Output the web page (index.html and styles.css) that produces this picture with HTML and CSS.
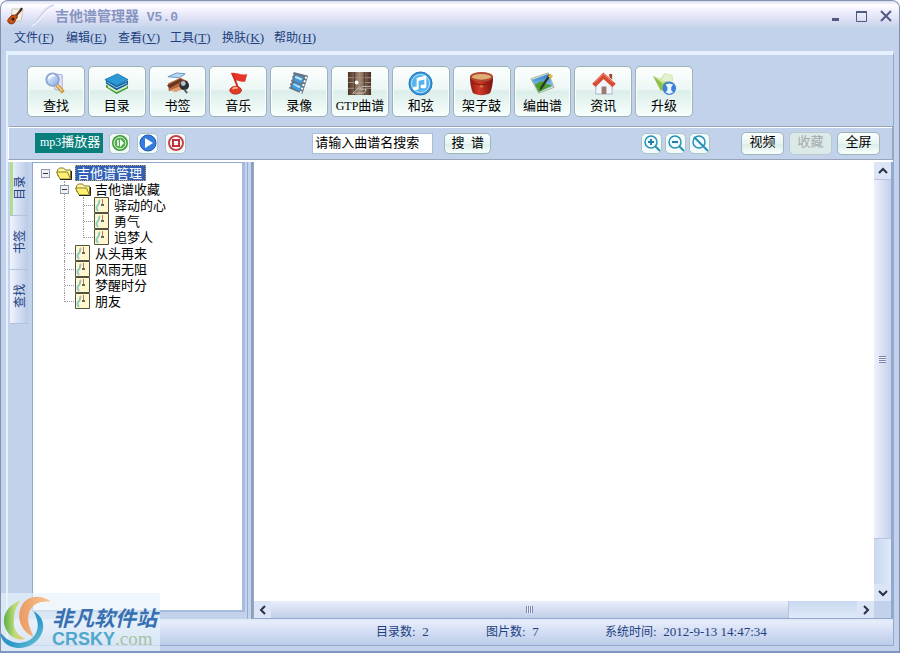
FILE: index.html
```html
<!DOCTYPE html>
<html lang="zh-CN">
<head>
<meta charset="utf-8">
<title>吉他谱管理器 V5.0</title>
<link rel="stylesheet" href="styles.css">
</head>
<body>
<svg class="defs" aria-hidden="true">
  <defs>
    <linearGradient id="lens" x1="0" y1="0" x2="1" y2="1"><stop offset="0" stop-color="#f4faff"/><stop offset="1" stop-color="#7fa9e0"/></linearGradient>
    <linearGradient id="sky" x1="0" y1="0" x2="0" y2="1"><stop offset="0" stop-color="#2d7fd0"/><stop offset="1" stop-color="#b5dcf5"/></linearGradient>
    <linearGradient id="wood" x1="0" y1="0" x2="1" y2="0"><stop offset="0" stop-color="#493224"/><stop offset=".5" stop-color="#a58b76"/><stop offset="1" stop-color="#453026"/></linearGradient>
    <linearGradient id="drum" x1="0" y1="0" x2="1" y2="0"><stop offset="0" stop-color="#8f1712"/><stop offset=".4" stop-color="#d43a29"/><stop offset="1" stop-color="#79120d"/></linearGradient>
    <linearGradient id="leaf" x1="0" y1="0" x2="1" y2="0"><stop offset="0" stop-color="#5caf45"/><stop offset=".5" stop-color="#bddb79"/><stop offset="1" stop-color="#f3c46d"/></linearGradient>
    <linearGradient id="ocean" x1="0" y1="0" x2="1" y2="1"><stop offset="0" stop-color="#2877b9"/><stop offset=".6" stop-color="#2f9bc9"/><stop offset="1" stop-color="#7dcbd7"/></linearGradient>
    <linearGradient id="flame" x1="0" y1="0" x2="1" y2="0"><stop offset="0" stop-color="#ec9a63"/><stop offset="1" stop-color="#f8c795"/></linearGradient>
    <symbol id="folder" viewBox="0 0 16 15">
      <path d="M1.500 9V4l2-2h4l2 2h5v8H4z" fill="#fff6a0" stroke="#817a21"/>
      <path d="M.5 6h11l3 7H4z" fill="#ffef73" stroke="#8b8124"/>
      <path d="M15.500 5v8.500H4" fill="none" stroke="#222"/>
    </symbol>
    <symbol id="sheet" viewBox="0 0 15 16">
      <path d="M.5.5h14v15H.5z" fill="#fff8cf" stroke="#52523d"/>
      <path d="M6 3c-2 2 0 3-2 5s-2 3 0 6" fill="none" stroke="#8fc9c3" stroke-width="2"/>
      <path d="M8.500 2v6" stroke="#e0684c"/><path d="M7 7h3v2H7z" fill="#5e6c60"/>
    </symbol>
  </defs>
</svg>
<div class="window">
  <header class="titlebar">
    <svg class="app-icon" viewBox="0 0 18 18" aria-hidden="true"><path d="M5 2h11l-2 12H4z" fill="#f4f2e6" stroke="#c8c8bd"/><path d="M7 11l7-8" stroke="#6b3516" stroke-width="2"/><path d="M13 4l2-3" stroke="#322015" stroke-width="2"/><path d="M4 9c2-2 3 0 4-1s3 1 2 3-2 1-2 3-3 4-6 2 0-5 2-7z" fill="#c75618" stroke="#7f310c"/><circle cx="6" cy="12" r="1.500" fill="#3a190b"/></svg>
    <svg class="swoosh" viewBox="0 0 30 24" aria-hidden="true"><path d="M5 22C15 17 16 5 29 1" fill="none" stroke="#d3d7ec" stroke-width="2"/><path d="M7 22C17 17 18 6 30 2" fill="none" stroke="#fff" stroke-width="1"/></svg>
    <h1 class="title">吉他谱管理器<span class="latin-title"> V5.0</span></h1>
    <div class="win-buttons">
      <button type="button" class="win-button" aria-label="最小化"><svg viewBox="0 0 12 12"><path d="M2 8h7v3H2z" fill="#535a80"/></svg></button>
      <button type="button" class="win-button" aria-label="最大化"><svg viewBox="0 0 12 12"><path d="M1.500 1.500h10v10h-10z" fill="none" stroke="#535a80"/><path d="M1 1h11v2H1z" fill="#535a80"/></svg></button>
      <button type="button" class="win-button" aria-label="关闭"><svg viewBox="0 0 12 12"><path d="M1 1l10 10M11 1L1 11" stroke="#535a80" stroke-width="2"/></svg></button>
    </div>
  </header>
  <nav class="menu">
    <button type="button">文件<span class="latin">(<u>F</u>)</span></button>
    <button type="button">编辑<span class="latin">(<u>E</u>)</span></button>
    <button type="button">查看<span class="latin">(<u>V</u>)</span></button>
    <button type="button">工具<span class="latin">(<u>T</u>)</span></button>
    <button type="button">换肤<span class="latin">(<u>K</u>)</span></button>
    <button type="button">帮助<span class="latin">(<u>H</u>)</span></button>
  </nav>
  <div class="frame">
    <div class="toolbar">
      <button type="button" class="tool"><svg viewBox="0 0 26 26"><path d="M12 3l8 1v17l-8-2z" fill="#e4e6f7" stroke="#a9aed6"/><path d="M14 14l7 8" stroke="#c98b36" stroke-width="4"/><path d="M14 14l6 7" stroke="#f0cb7e" stroke-width="2"/><circle cx="10" cy="9" r="6.500" fill="url(#lens)" stroke="#8fa6d6" stroke-width="2"/><path d="M6 8c1-3 4-4 6-3" stroke="#fff" stroke-width="2" fill="none"/></svg>查找</button>
      <button type="button" class="tool"><svg viewBox="0 0 26 26"><path d="M2 14l11 7 12-6v3l-12 6-11-7z" fill="#3b9a32"/><path d="M4 15l9 5 11-5v2l-11 5-9-5z" fill="#d7eabf"/><path d="M2 9l11 6 12-5v4l-12 6-11-7z" fill="#165f96"/><path d="M3 11l10 6 11-5v1l-11 5-10-6z" fill="#8fc9e4"/><path d="M1 9l13-6 11 6-12 6z" fill="#2b9ad4" stroke="#1979b3"/></svg>目录</button>
      <button type="button" class="tool"><svg viewBox="0 0 26 26"><path d="M3 6l9-4 9 1-6 4z" fill="#b8d7ef" stroke="#6495bf"/><path d="M3 13l13-6 8 4-11 7-9 3z" fill="#bb673e"/><path d="M2 15l14-7 3 2-14 8z" fill="#693622"/><path d="M5 20l13-5 3 3-10 4z" fill="#e4a179"/><circle cx="20" cy="15" r="5" fill="#2e3037"/><circle cx="19" cy="13" r="2.500" fill="#b8c2cb"/><path d="M20 19l3 4" stroke="#5b5b5b" stroke-width="2"/></svg>书签</button>
      <button type="button" class="tool"><svg viewBox="0 0 26 26"><path d="M5 2c6-1 10 3 17 1l-2 8c-4 1-7-2-11-1z" fill="#e63426"/><path d="M7 3l6 16" stroke="#d02a1c" stroke-width="2"/><ellipse cx="10" cy="20" rx="6" ry="4" fill="#e43a25" stroke="#bd2419"/><path d="M7 19c1-2 4-2 5-1" stroke="#ffb092" stroke-width="2" fill="none"/></svg>音乐</button>
      <button type="button" class="tool"><svg viewBox="0 0 26 26"><path d="M7 1l15 4-6 19-14-6z" fill="#657684"/><path d="M9 4l8 3-2 6-8-3zM7 12l8 3-2 6-8-4z" fill="#3c9de2"/><path d="M9 5l7 3-1 2-7-3zM7 13l7 3-1 2-7-4z" fill="#bae5fa"/><path d="M6 3L2 18M20 6l-6 17" stroke="#fff" stroke-width="2" stroke-dasharray="2 2"/></svg>录像</button>
      <button type="button" class="tool"><svg viewBox="0 0 26 26"><path fill="url(#wood)" d="M1 1h24v24H1z"/><path d="M1 7h24M1 12h24M1 18h24" stroke="#a08d78"/><path d="M8 1v24M18 1v24" stroke="#4b382b"/><circle cx="10" cy="12" r="2" fill="#fff"/><path d="M25 16h-9l-3 3h7l-2 4H6l7-6" fill="none" stroke="#c8c0b8"/></svg><span><span class="latin-lg">GTP</span>曲谱</span></button>
      <button type="button" class="tool"><svg viewBox="0 0 26 26"><circle cx="13" cy="13" r="12" fill="#3897dc" stroke="#2374b4"/><circle cx="13" cy="13" r="9.500" fill="#56b4ef" stroke="#bae7ff"/><path d="M10 18V8l8-2v10" fill="none" stroke="#fff" stroke-width="2"/><path d="M10 9l8-2" stroke="#fff" stroke-width="3"/><ellipse cx="8" cy="18" rx="3" ry="2" fill="#fff"/><ellipse cx="16" cy="16" rx="3" ry="2" fill="#fff"/></svg>和弦</button>
      <button type="button" class="tool"><svg viewBox="0 0 26 26"><path d="M1 6c0 6 1 12 3 17 5 3 13 3 18 0 2-5 3-11 3-17z" fill="url(#drum)"/><ellipse cx="13" cy="6" rx="11" ry="4" fill="#dfae77" stroke="#b04a30" stroke-width="2"/><path d="M3 12c6 3 14 3 20 0" stroke="#7f1711" fill="none"/><circle cx="13" cy="16" r="1.500" fill="#c98044"/></svg>架子鼓</button>
      <button type="button" class="tool"><svg viewBox="0 0 26 26"><path d="M1 8l18-6 6 15-16 6z" fill="#f4f7ee" stroke="#9aaf96"/><path d="M2 9l17-6 5 13-15 6z" fill="url(#sky)"/><path d="M5 14c5-2 7-6 11-1l7 2-14 7z" fill="#4d9e2b"/><path d="M22 4l-9 14-3 3 1-5 9-13z" fill="#293527"/><path d="M20 3l4 2-2 3-3-2z" fill="#e0bf3b"/></svg>编曲谱</button>
      <button type="button" class="tool"><svg viewBox="0 0 26 26"><path d="M5 13l8-8 9 9v10H5z" fill="#f1f4fc" stroke="#aab4c8"/><path d="M11 16h5v8h-5z" fill="#9b796c"/><path d="M3 15L13 5l11 10" fill="none" stroke="#d74b31" stroke-width="5"/><path d="M4 12l9-9 10 9" fill="none" stroke="#f5937a"/><path d="M19 3h3v6l-3-3z" fill="#a93f29"/></svg>资讯</button>
      <button type="button" class="tool"><svg viewBox="0 0 26 26"><path d="M1 5l8 3 4-6 8 2 2 14-14 3z" fill="#cfe5a0"/><path d="M1 5l10 8 10-6-1 12-11 1z" fill="#8cc14c"/><path d="M10 10l4-8 6 2 2 8z" fill="#e3f1cf"/><circle cx="18" cy="18" r="7" fill="#3e80d5"/><path d="M14 14l4-1 4 1-2 3v3l2 2-4 2-4-2 2-2v-3z" fill="#e8f6ff"/></svg>升级</button>
    </div>
    <div class="subbar">
      <span class="player-label"><span class="latin-lg">mp3</span>播放器</span>
      <div class="player">
        <button type="button" class="round" aria-label="暂停"><svg viewBox="0 0 18 18"><circle cx="9" cy="9" r="8" fill="#389934"/><circle cx="9" cy="9" r="6" fill="#55ae4b" stroke="#ecffe8"/><path d="M7 6v6" stroke="#fff" stroke-width="1.500"/><path d="M9 5v8l4-4z" fill="#fff"/></svg></button>
        <button type="button" class="round" aria-label="播放"><svg viewBox="0 0 18 18"><circle cx="9" cy="9" r="8" fill="#347de0" stroke="#2854af"/><path d="M6 4l8 5-8 5z" fill="#fff"/></svg></button>
        <button type="button" class="round" aria-label="停止"><svg viewBox="0 0 18 18"><circle cx="9" cy="9" r="7" fill="#fff" stroke="#c8434a" stroke-width="2"/><path d="M6 6h6v6H6z" fill="#fff" stroke="#bd333a" stroke-width="2"/></svg></button>
      </div>
      <div class="search">
        <input type="text" class="search-box" aria-label="曲谱名" value="请输入曲谱名搜索">
        <button type="button" class="small search-button">搜&ensp;谱</button>
      </div>
      <div class="zooms">
        <button type="button" class="round" aria-label="放大"><svg viewBox="0 0 18 18"><circle cx="8" cy="8" r="6" fill="#effbff" stroke="#2590b6" stroke-width="1.500"/><path d="M12 12l5 5" stroke="#2590b6" stroke-width="2"/><path d="M5 8h6M8 5v6" stroke="#217da8" stroke-width="2"/></svg></button>
        <button type="button" class="round" aria-label="缩小"><svg viewBox="0 0 18 18"><circle cx="8" cy="8" r="6" fill="#effbff" stroke="#2590b6" stroke-width="1.500"/><path d="M12 12l5 5" stroke="#2590b6" stroke-width="2"/><path d="M5 8h6" stroke="#217da8" stroke-width="2"/></svg></button>
        <button type="button" class="round" aria-label="还原"><svg viewBox="0 0 18 18"><circle cx="8" cy="8" r="6" fill="#effbff" stroke="#2590b6" stroke-width="1.500"/><path d="M3 3l14 14" stroke="#2590b6" stroke-width="2"/></svg></button>
      </div>
      <div class="actions">
        <button type="button" class="small">视频</button>
        <button type="button" class="small" disabled>收藏</button>
        <button type="button" class="small">全屏</button>
      </div>
    </div>
    <main class="work">
      <div class="tabs">
        <button type="button" class="tab active"><span>目录</span></button>
        <button type="button" class="tab"><span>书签</span></button>
        <button type="button" class="tab"><span>查找</span></button>
      </div>
      <div class="tree-panel">
        <ul class="tree">
          <li><div class="row"><button type="button" class="expander" aria-label="折叠"></button><svg class="folder"><use href="#folder"/></svg><span class="node selected">吉他谱管理</span></div>
            <ul>
              <li><div class="row"><button type="button" class="expander" aria-label="折叠"></button><svg class="folder"><use href="#folder"/></svg><span class="node">吉他谱收藏</span></div>
                <ul>
                  <li><div class="row leaf"><svg class="sheet"><use href="#sheet"/></svg><span class="node">驿动的心</span></div></li>
                  <li><div class="row leaf"><svg class="sheet"><use href="#sheet"/></svg><span class="node">勇气</span></div></li>
                  <li><div class="row leaf"><svg class="sheet"><use href="#sheet"/></svg><span class="node">追梦人</span></div></li>
                </ul>
              </li>
              <li><div class="row leaf"><svg class="sheet"><use href="#sheet"/></svg><span class="node">从头再来</span></div></li>
              <li><div class="row leaf"><svg class="sheet"><use href="#sheet"/></svg><span class="node">风雨无阻</span></div></li>
              <li><div class="row leaf"><svg class="sheet"><use href="#sheet"/></svg><span class="node">梦醒时分</span></div></li>
              <li><div class="row leaf"><svg class="sheet"><use href="#sheet"/></svg><span class="node">朋友</span></div></li>
            </ul>
          </li>
        </ul>
      </div>
      <div class="splitter"></div>
      <section class="viewer">
        <div class="page"></div>
        <div class="vbar">
          <button type="button" class="arrow" aria-label="向上"><svg viewBox="0 0 10 10"><path d="M1 7l4-4 4 4" fill="none" stroke="#28304a" stroke-width="2"/></svg></button>
          <div class="thumb"><span class="grip"></span></div><div class="rest"></div>
          <button type="button" class="arrow" aria-label="向下"><svg viewBox="0 0 10 10"><path d="M1 3l4 4 4-4" fill="none" stroke="#28304a" stroke-width="2"/></svg></button>
        </div>
        <div class="hbar">
          <button type="button" class="arrow" aria-label="向左"><svg viewBox="0 0 10 10"><path d="M7 1L3 5l4 4" fill="none" stroke="#28304a" stroke-width="2"/></svg></button>
          <div class="thumb"><span class="grip"></span></div><div class="rest"></div>
          <button type="button" class="arrow" aria-label="向右"><svg viewBox="0 0 10 10"><path d="M3 1l4 4-4 4" fill="none" stroke="#28304a" stroke-width="2"/></svg></button>
        </div>
      </section>
    </main>
    <footer class="status">
      <span class="count">目录数<span class="latin">:  2</span></span>
      <span class="count">图片数<span class="latin">:  7</span></span>
      <span>系统时间<span class="latin">:  2012-9-13 14:47:34</span></span>
    </footer>
  </div>
  <div class="watermark">
    <svg viewBox="0 0 56 60" aria-hidden="true">
      <path d="M36 17c9 5 13 14 9 24-6 14-22 19-34 14C4 52 1 47 0 39c7 13 24 16 34 8 8-7 9-17 2-30z" fill="url(#ocean)"/>
      <path d="M22 6C9 10 2 21 5 33c3 11 13 17 22 14-9-4-13-11-12-20 0-9 3-16 7-21z" fill="url(#leaf)"/>
      <path d="M55 7C44-1 29 0 23 12c-6 13 0 27 13 33-4-10-8-19-4-28 4-8 11-11 23-10z" fill="url(#flame)"/>
    </svg>
    <div class="brand"><strong class="brand-name">非凡软件站</strong><span class="brand-site"><b>CRSKY</b><span class="domain">.com</span></span></div>
  </div>
</div>
</body>
</html>
```
FILE: styles.css
```css
* { box-sizing: border-box; }
body {
  margin: 0;
  background: #fff;
  color: #1f3f7f;
  font: 12px/16px "Noto Sans CJK SC", sans-serif;
}
button, input { font: inherit; color: inherit; margin: 0; padding: 0; border: 0; background: none; }
svg { display: block; flex: none; }
ul { list-style: none; margin: 0; padding: 0; }
.defs { position: absolute; width: 0; height: 0; }
.latin { font-family: "Liberation Serif", serif; font-size: 13px; white-space: pre; }
.latin-lg { font-family: "Liberation Serif", serif; font-size: 12px; }
.latin-title { font-family: "Liberation Mono", monospace; font-size: 13px; white-space: pre; }

.window {
  position: relative;
  display: flex;
  flex-direction: column;
  min-height: 100vh;
  border: 1px solid #8190ac;
  border-bottom: 2px solid #7f96c5;
  border-radius: 8px 8px 0 0;
  background: #c1d2ea;
  overflow: hidden;
}
.titlebar {
  display: flex;
  align-items: center;
  height: 28px;
  padding: 2px 7px 0 6px;
  background: linear-gradient(#d9dcf0, #fff 4px, #f4f3ff 8px, #dcdff4 19px, #c1d2ea);
}
.app-icon { width: 18px; height: 18px; }
.swoosh { width: 30px; height: 24px; }
.title { flex: 1; margin: 0; font-size: 14px; line-height: 20px; color: #8795c0; }
.win-buttons { display: flex; gap: 13px; }
.win-button svg { width: 12px; height: 12px; }
.menu { display: flex; height: 22px; padding-left: 13px; align-items: flex-start; color: #1f3f7f; }
.menu button { width: 52px; text-align: left; white-space: nowrap; }

.frame {
  flex: 1;
  display: flex;
  flex-direction: column;
  margin: 0 5px 5px 5px;
  border: 1px solid #93a9d3;
  border-top: 4px solid #e6f1ff;
  border-left: 2px solid #e6f1ff;
}
.toolbar {
  display: grid;
  grid-template-columns: repeat(11, minmax(0, 1fr));
  gap: 3px;
  max-width: 685px;
  padding: 11px 0 9px 19px;
}
.tool {
  display: flex;
  flex-direction: column;
  align-items: center;
  gap: 1px;
  height: 51px;
  padding-top: 4px;
  border: 1px solid #9db3b5;
  border-radius: 5px;
  background: linear-gradient(#fcfffe, #edf7f5 45%, #dceeea 50%, #f8fffc);
  box-shadow: inset 0 0 0 1px #f8ffff;
  color: #000;
  font-size: 13px;
  white-space: nowrap;
}
.tool svg { width: 25px; height: 25px; }

.subbar {
  display: flex;
  align-items: center;
  height: 34px;
  padding: 0 12px 0 26px;
  border: 1px solid #98a5b8;
  border-left-color: #fff;
  box-shadow: inset 0 1px #fff, 0 2px #fff;
  color: #000;
  font-size: 13px;
}
.player-label { padding: 0 3px 3px 5px; background: #087f7b; color: #fff; white-space: nowrap; }
.player { display: flex; gap: 7px; margin-left: 6px; }
.round {
  display: grid;
  place-items: center;
  width: 21px;
  height: 21px;
  border: 1px solid #adc2ca;
  border-radius: 5px;
  background: #f3fbfa;
}
.round svg { width: 18px; height: 18px; }
.search { display: flex; gap: 11px; margin-left: 126px; }
.search-box { width: 121px; height: 21px; padding: 0 2px 4px; border: 1px solid #a9bfd8; background: #fff; }
.small {
  width: 43px;
  height: 23px;
  padding-bottom: 4px;
  border: 1px solid #9eb5b7;
  border-radius: 5px;
  background: linear-gradient(#fafffe, #e8f5f3 50%, #dceeea 55%, #f8fffc);
  color: #000;
}
.small:disabled { background: #dce9e9; color: #a4aba9; border-color: #bbcacb; }
.search-button { width: 47px; height: 21px; line-height: 16px; }
.zooms { display: flex; gap: 3px; margin-left: auto; }
.actions { display: flex; gap: 5px; margin-left: 31px; }

.work { flex: 1; display: flex; min-height: 440px; padding-top: 2px; }
.tabs { display: flex; flex-direction: column; width: 24px; padding: 0 4px 0 2px; }
.tab {
  display: grid;
  place-items: center;
  height: 54px;
  border-bottom: 1px solid #b1c1df;
  background: linear-gradient(90deg, #f0f4fd, #d4def2 50%, #b9cbe7);
  font-size: 12px;
}
.tab.active { box-shadow: inset 3px 0 #b5db8c; }
.tab span { writing-mode: vertical-rl; text-orientation: sideways; transform: rotate(180deg); }
.tree-panel {
  width: 213px;
  margin-bottom: 7px;
  padding: 2px 3px;
  border: 1px solid #92a8cf;
  border-right: 3px solid #a7bbdf;
  border-bottom: 2px solid #a7bbdf;
  background: #fff;
}
.tree { color: #000; font-size: 13px; }
.tree ul { padding-left: 19px; }
.tree ul li { position: relative; }
.tree ul li::before {
  content: "";
  position: absolute;
  left: 9px;
  top: 0;
  height: 100%;
  border-left: 1px dotted #999;
}
.tree ul li:last-child::before { height: 9px; }
.row { position: relative; display: flex; align-items: center; height: 16px; }
.leaf::before { content: ""; width: 9px; margin-left: 10px; border-top: 1px dotted #999; }
.expander {
  width: 9px;
  height: 9px;
  margin: 0 6px 0 5px;
  border: 1px solid #8e9aae;
  background: linear-gradient(#333, #333) center / 5px 1px no-repeat #f0f1f4;
}
.folder { width: 16px; height: 15px; margin-right: 4px; }
.sheet { width: 15px; height: 16px; margin: 0 5px 0 1px; }
.node { line-height: 16px; white-space: nowrap; }
.selected { padding: 0 4px 0 2px; margin-left: -1px; background: #315fb5; color: #fff; outline: 1px dotted #c6a15f; outline-offset: -1px; }
.splitter { width: 8px; border-left: 2px solid #c3d3ee; border-right: 2px solid #8f9fba; background: linear-gradient(90deg, #96abd2 1px, #c4d4ea 1px, #c4d4ea); }

.viewer {
  flex: 1;
  display: grid;
  grid-template: 1fr 17px / 1fr 17px;
  border: 1px solid #92a8cf;
  border-top: 0;
  border-right-width: 2px;
}
.page { background: #fff; }
.vbar, .hbar { display: flex; }
.vbar { flex-direction: column; background: #d5e2f5; }
.arrow { display: grid; place-items: center; flex: none; width: 17px; height: 17px; background: #dce5f5; }
.arrow svg { width: 10px; height: 10px; }
.thumb { display: grid; place-items: center; }
.vbar .thumb { flex: 362; border: 1px solid #b9c5e0; border-width: 1px 0; background: linear-gradient(90deg, #eef1fc, #d6ddf2 60%, #c5d0ea); }
.vbar .rest { flex: 45; background: linear-gradient(90deg, #c9d8ef, #dfeafa); }
.hbar .thumb { flex: 518; border-right: 1px solid #b9c5e0; background: linear-gradient(#e9effa, #d6ddf2 50%, #bfcfe8); }
.hbar .rest { flex: 68; background: linear-gradient(#c9d8ef, #dfeafa); }
.grip { width: 7px; height: 7px; background: repeating-linear-gradient(#7b88ae 0 1px, #eef 1px 2px); }
.hbar .grip { background: repeating-linear-gradient(90deg, #7b88ae 0 1px, #eef 1px 2px); }

.status {
  display: flex;
  height: 26px;
  padding: 2px 0 0 368px;
  border-top: 2px solid #dfe9f8;
  background: linear-gradient(#e7edfb, #d1dcf3 50%, #bccce8);
  white-space: nowrap;
}
.count { width: 110px; }
.count + .count { width: 119px; }

.watermark {
  position: absolute;
  left: -1px;
  bottom: -2px;
  display: flex;
  width: 160px;
  height: 60px;
  background: rgba(232, 243, 250, .65);
}
.watermark svg { width: 52px; height: 60px; }
.brand { display: flex; flex-direction: column; padding-top: 12px; }
.brand-name { font-size: 21px; line-height: 25px; font-style: italic; font-weight: 700; color: #3770b0; white-space: nowrap; }
.brand-site { font: 18px/18px "Liberation Sans", sans-serif; color: #4fa8cb; white-space: nowrap; }
.domain { font-family: "Liberation Serif", serif; font-size: 19px; color: #a5c3a5; }
```
